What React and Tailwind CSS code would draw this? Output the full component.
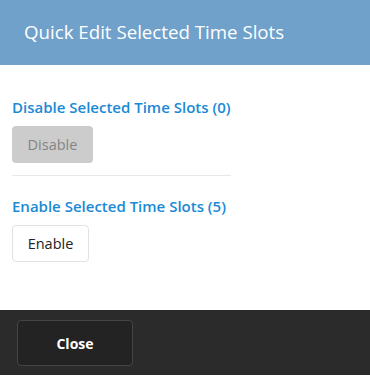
const QuickEditSlots = () => {
    return (
        <div className="w-[370px] h-[376px] bg-white flex flex-col font-['Open_Sans',sans-serif]">
            {/* Header */}
            <div className="h-[65px] shrink-0 bg-[#6fa1cb] flex items-center px-6">
                <h1 className="text-white text-[18.7px] leading-none">Quick Edit Selected Time Slots</h1>
            </div>

            {/* Body */}
            <div className="flex-1 pt-8 px-3">
                <div className="w-[219px]">
                    <h2 className="text-[#1a8ad6] text-[15px] font-semibold leading-5">
                        Disable Selected Time Slots (0)
                    </h2>
                    <button
                        disabled
                        className="mt-[9px] h-[37px] w-[81px] rounded bg-[#cccccc] text-[#858585] text-[14.5px] font-medium"
                    >
                        Disable
                    </button>
                    <div className="mt-3 border-t border-[#e8e8e8]" />
                    <h2 className="mt-5 text-[#1a8ad6] text-[15px] font-semibold leading-5">
                        Enable Selected Time Slots (5)
                    </h2>
                    <button className="mt-[9px] h-[37px] w-[77px] rounded border border-[#e2e2e2] bg-white text-[#222222] text-[14.5px] font-medium">
                        Enable
                    </button>
                </div>
            </div>

            {/* Footer */}
            <div className="h-[65px] shrink-0 bg-[#2b2b2b] pt-[10px] pl-[17px]">
                <button className="h-[46px] w-[116px] rounded border border-[#444444] bg-[#232323] text-white text-[14px] font-bold">
                    Close
                </button>
            </div>
            <div className="h-px shrink-0 bg-white" />
        </div>
    );
};

export default function App() {
    return <QuickEditSlots />;
}
